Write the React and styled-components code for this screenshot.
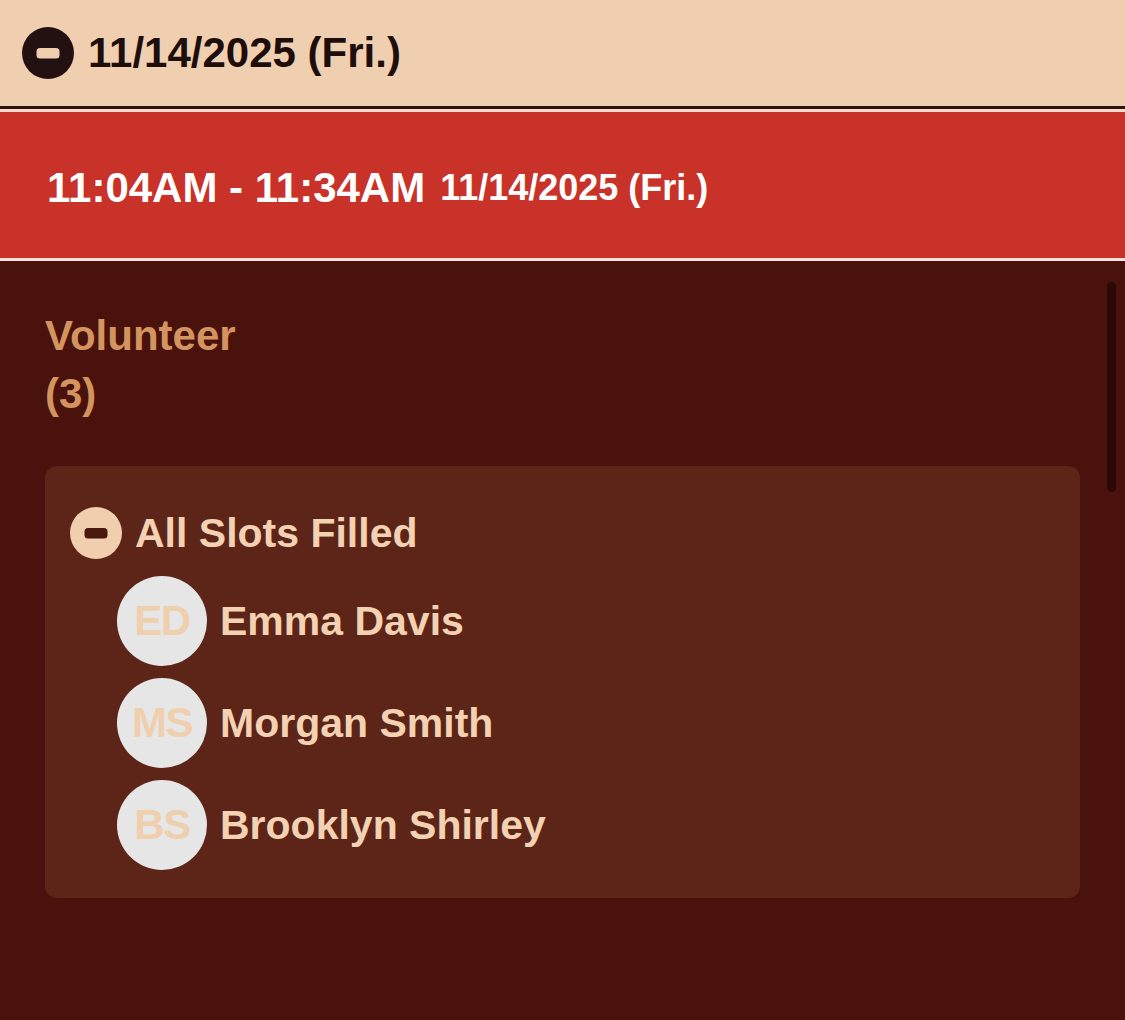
import React from 'react'
import styled, { createGlobalStyle } from 'styled-components'

const GlobalStyle = createGlobalStyle`
    html, body {
        margin: 0;
        padding: 0;
        background: #4a120c;
    }
    body {
        font-family: "Liberation Sans", Arial, Helvetica, sans-serif;
    }
`

const Page = styled.div`
    min-height: 1020px;
    background: #4a120c;
    display: flex;
    flex-direction: column;
`

const DayHeader = styled.div`
    height: 106px;
    background: #f0cfb0;
    border-bottom: 3px solid #2a1511;
    display: flex;
    align-items: center;
    gap: 14px;
    padding-left: 22px;
    font-size: 42px;
    font-weight: 700;
    color: #1e0e0b;
`

const SlotBar = styled.div`
    height: 146px;
    box-sizing: border-box;
    background: #c93228;
    border-top: 3px solid #f6d9cf;
    border-bottom: 3px solid #f6e2da;
    display: flex;
    align-items: center;
    padding: 5px 0 0 47px;
    height: 152px;
    color: #ffffff;
    font-weight: 700;
`

const SlotTime = styled.span`
    font-size: 42px;
`

const SlotDate = styled.span`
    font-size: 36px;
    margin-left: 15px;
`

const Body = styled.div`
    position: relative;
    flex: 1;
    padding: 46px 45px 40px;
`

const Scrollbar = styled.div`
    position: absolute;
    top: 21px;
    right: 9px;
    width: 9px;
    height: 210px;
    border-radius: 5px;
    background: #2a0906;
`

const RoleLabel = styled.div`
    width: 220px;
    font-size: 42px;
    line-height: 58px;
    font-weight: 700;
    color: #d4945f;
    margin-bottom: 43px;
`

const Card = styled.div`
    background: #5d2418;
    border-radius: 12px;
    padding: 41px 25px 28px;
    display: flex;
    flex-direction: column;
`

const GroupRow = styled.div`
    display: flex;
    align-items: center;
    gap: 13px;
    font-size: 41px;
    font-weight: 700;
    color: #f2d2b2;
    height: 52px;
    margin-bottom: 17px;
`

const People = styled.div`
    display: flex;
    flex-direction: column;
    gap: 12px;
    margin-left: 47px;
`

const Person = styled.div`
    display: flex;
    align-items: center;
    gap: 13px;
    font-size: 41px;
    font-weight: 700;
    color: #f2d2b2;
`

const Avatar = styled.div`
    width: 90px;
    height: 90px;
    border-radius: 50%;
    background: #e6e6e6;
    color: #f0cfae;
    display: grid;
    place-items: center;
    font-size: 42px;
    font-weight: 700;
    letter-spacing: -1.5px;
`

const MinusIcon = ({ fill, bar }) => (
    <svg width="52" height="52" viewBox="0 0 52 52">
        <circle cx="26" cy="26" r="26" fill={fill} />
        <rect x="14.5" y="21" width="23" height="10.5" rx="3.5" fill={bar} />
    </svg>
)

const people = [
    { initials: 'ED', name: 'Emma Davis' },
    { initials: 'MS', name: 'Morgan Smith' },
    { initials: 'BS', name: 'Brooklyn Shirley' },
]

const App = () => {
    return (
        <>
            <GlobalStyle />
            <Page>
                <DayHeader>
                    <MinusIcon fill="#221110" bar="#f0cfb0" />
                    <span>11/14/2025 (Fri.)</span>
                </DayHeader>
                <SlotBar>
                    <SlotTime>11:04AM - 11:34AM</SlotTime>
                    <SlotDate>11/14/2025 (Fri.)</SlotDate>
                </SlotBar>
                <Body>
                    <Scrollbar />
                    <RoleLabel>Volunteer (3)</RoleLabel>
                    <Card>
                        <GroupRow>
                            <MinusIcon fill="#f0cfae" bar="#4a1a10" />
                            <span>All Slots Filled</span>
                        </GroupRow>
                        <People>
                            {people.map((p) => (
                                <Person key={p.name}>
                                    <Avatar>{p.initials}</Avatar>
                                    <span>{p.name}</span>
                                </Person>
                            ))}
                        </People>
                    </Card>
                </Body>
            </Page>
        </>
    )
}

export default App
